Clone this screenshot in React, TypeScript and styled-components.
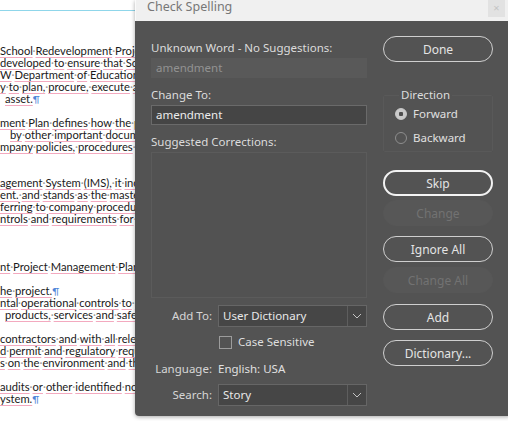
import React from "react";
import styled, { createGlobalStyle } from "styled-components";

const GlobalStyle = createGlobalStyle`
  html, body {
    margin: 0;
    padding: 0;
    background: #ffffff;
    overflow: hidden;
  }
`;

// lines of the document behind the dialog, one per 12px row ("" = empty row)
const docLines: { text: string; indent?: number }[] = [
  { text: "School Redevelopment Project Plan" },
  { text: "developed to ensure that School" },
  { text: "W Department of Education" },
  { text: "y to plan, procure, execute and" },
  { text: "asset.¶", indent: 5 },
  { text: "" },
  { text: "ment Plan defines how the project" },
  { text: "by other important documents", indent: 10 },
  { text: "mpany policies, procedures and" },
  { text: "" },
  { text: "" },
  { text: "agement System (IMS), it includes" },
  { text: "ent. and stands as the master" },
  { text: "ferring to company procedures" },
  { text: "ntrols and requirements for the" },
  { text: "" },
  { text: "" },
  { text: "" },
  { text: "nt Project Management Plan" },
  { text: "" },
  { text: "he project.¶" },
  { text: "ntal operational controls to meet" },
  { text: "products, services and safety", indent: 5 },
  { text: "" },
  { text: "contractors and with all relevant" },
  { text: "d permit and regulatory requirements" },
  { text: "s on the environment and the" },
  { text: "" },
  { text: "audits or other identified non" },
  { text: "ystem.¶" },
];

const renderDocText = (text: string) => {
  const words = text.split(" ");
  return words.map((word, i) => {
    const hasMark = word.endsWith("¶");
    const clean = hasMark ? word.slice(0, -1) : word;
    return (
      <React.Fragment key={i}>
        {i > 0 && <SpaceDot>·</SpaceDot>}
        <Word>{clean}</Word>
        {hasMark && <Pilcrow>¶</Pilcrow>}
      </React.Fragment>
    );
  });
};

const ChevronIcon = () => (
  <svg width="10" height="6" viewBox="0 0 10 6">
    <path d="M1 1 L5 5 L9 1" fill="none" stroke="#c4c4c4" strokeWidth="1" />
  </svg>
);

export default function App() {
  return (
    <>
      <GlobalStyle />
      <Page>
        <Document>
          <MarginGuide />
          {docLines.map((line, i) => (
            <DocLine key={i} $indent={line.indent ?? 0}>
              {line.text ? renderDocText(line.text) : "\u00a0"}
            </DocLine>
          ))}
        </Document>

        <Dialog>
          <TitleBar>
            <Title>Check Spelling</Title>
            <CloseBox>×</CloseBox>
          </TitleBar>

          <Body>
            <MainColumn>
              <Label $top={4}>Unknown Word - No Suggestions:</Label>
              <ReadOnlyField>amendment</ReadOnlyField>
              <Label $top={9}>Change To:</Label>
              <TextField>amendment</TextField>
              <Label $top={9}>Suggested Corrections:</Label>
              <ListBox />

              <FormRow $top={7}>
                <RowLabel>Add To:</RowLabel>
                <Select>
                  <SelectValue>User Dictionary</SelectValue>
                  <SelectArrow>
                    <ChevronIcon />
                  </SelectArrow>
                </Select>
              </FormRow>

              <FormRow $top={7}>
                <RowLabel />
                <CheckLine>
                  <CheckBox />
                  <span>Case Sensitive</span>
                </CheckLine>
              </FormRow>

              <FormRow $top={11}>
                <RowLabel>Language:</RowLabel>
                <RowValue>English: USA</RowValue>
              </FormRow>

              <FormRow $top={7}>
                <RowLabel>Search:</RowLabel>
                <Select>
                  <SelectValue>Story</SelectValue>
                  <SelectArrow>
                    <ChevronIcon />
                  </SelectArrow>
                </Select>
              </FormRow>
            </MainColumn>

            <ButtonColumn>
              <PillButton>Done</PillButton>

              <DirectionGroup>
                <Legend>Direction</Legend>
                <RadioRow>
                  <Radio $checked />
                  <span>Forward</span>
                </RadioRow>
                <RadioRow $top={8}>
                  <Radio />
                  <span>Backward</span>
                </RadioRow>
              </DirectionGroup>

              <PillButton $top={18} $focused>
                Skip
              </PillButton>
              <PillButton $top={4} disabled>
                Change
              </PillButton>
              <PillButton $top={10}>Ignore All</PillButton>
              <PillButton $top={5} disabled>
                Change All
              </PillButton>
              <PillButton $top={11}>Add</PillButton>
              <PillButton $top={10}>Dictionary...</PillButton>
            </ButtonColumn>
          </Body>
        </Dialog>
      </Page>
    </>
  );
}

const Page = styled.div`
  position: relative;
  width: 508px;
  height: 421px;
  overflow: hidden;
  background: #ffffff;
`;

const Document = styled.div`
  padding-top: 45px;
  font-family: Lato, "Open Sans", sans-serif;
  font-size: 11.2px;
  color: #1a1a1a;
`;

const MarginGuide = styled.div`
  position: absolute;
  top: 10px;
  left: 0;
  width: 140px;
  height: 1px;
  background: #8fd6ea;
`;

const DocLine = styled.div<{ $indent: number }>`
  height: 12px;
  line-height: 12px;
  white-space: nowrap;
  padding-left: ${({ $indent }) => $indent}px;
`;

const Word = styled.span`
  text-decoration: underline;
  text-decoration-color: #f3a9bf;
  text-underline-offset: 2px;
`;

const SpaceDot = styled.span`
  color: #9a9a9a;
`;

const Pilcrow = styled.span`
  color: #4f86d8;
  font-size: 10px;
`;

const Dialog = styled.div`
  position: absolute;
  top: 0;
  left: 135px;
  width: 376px;
  height: 416px;
  display: flex;
  flex-direction: column;
  border-radius: 0 0 4px 4px;
  overflow: hidden;
  box-shadow: 0 1px 4px rgba(0, 0, 0, 0.35);
  font-family: "Noto Sans", "Open Sans", sans-serif;
  font-size: 11.5px;
  color: #d9d9d9;
`;

const TitleBar = styled.div`
  height: 21px;
  flex-shrink: 0;
  display: flex;
  align-items: flex-start;
  justify-content: space-between;
  background: #f0f0f0;
  border-left: 1px solid #fafafa;
  padding-left: 11px;
  padding-right: 6px;
`;

const Title = styled.span`
  font-family: "Noto Sans", sans-serif;
  font-size: 12.5px;
  line-height: 15px;
  margin-top: -1px;
  color: #777777;
`;

const CloseBox = styled.div`
  width: 17px;
  height: 17px;
  background: #e2e2e2;
  color: #c4c4c4;
  font-size: 11px;
  line-height: 16px;
  text-align: center;
`;

const Body = styled.div`
  flex: 1;
  display: flex;
  gap: 16px;
  padding: 15px 0 0 16px;
  background: #535353;
`;

const MainColumn = styled.div`
  width: 216px;
  display: flex;
  flex-direction: column;
`;

const Label = styled.div<{ $top?: number }>`
  margin-top: ${({ $top = 0 }) => $top}px;
  line-height: 16px;
  color: #dcdcdc;
`;

const ReadOnlyField = styled.div`
  margin-top: 2px;
  height: 20px;
  line-height: 20px;
  padding-left: 5px;
  background: #595959;
  color: #929292;
`;

const TextField = styled.div`
  margin-top: 2px;
  height: 18px;
  line-height: 18px;
  padding-left: 4px;
  background: #454545;
  border: 1px solid #6a6a6a;
  color: #ececec;
`;

const ListBox = styled.div`
  margin-top: 2px;
  height: 144px;
  border: 1px solid #5b5b5b;
  background: #525252;
`;

const FormRow = styled.div<{ $top?: number }>`
  margin-top: ${({ $top = 0 }) => $top}px;
  display: grid;
  grid-template-columns: 61px 1fr;
  column-gap: 6px;
  align-items: center;
`;

const RowLabel = styled.span`
  text-align: right;
  line-height: 16px;
  color: #d6d6d6;
`;

const RowValue = styled.span`
  line-height: 16px;
  color: #e0e0e0;
`;

const Select = styled.div`
  height: 20px;
  display: flex;
  background: #464646;
  border: 1px solid #666666;
`;

const SelectValue = styled.span`
  flex: 1;
  line-height: 20px;
  padding-left: 4px;
  color: #e8e8e8;
`;

const SelectArrow = styled.span`
  width: 18px;
  display: flex;
  align-items: center;
  justify-content: center;
  border-left: 1px solid #5e5e5e;
`;

const CheckLine = styled.label`
  display: flex;
  align-items: center;
  gap: 6px;
  line-height: 16px;
  padding-left: 1px;
  color: #dedede;
`;

const CheckBox = styled.span`
  width: 11px;
  height: 11px;
  border: 1px solid #9c9c9c;
`;

const ButtonColumn = styled.div`
  width: 110px;
  display: flex;
  flex-direction: column;
`;

const PillButton = styled.button<{ $top?: number; $focused?: boolean }>`
  margin-top: ${({ $top = 0 }) => $top}px;
  height: 26px;
  padding: 0;
  border-radius: 13px;
  font-family: "Noto Sans", "Open Sans", sans-serif;
  font-size: 12px;
  background: transparent;
  color: #e4e4e4;
  border: ${({ $focused }) => ($focused ? "2px solid #f2f2f2" : "1px solid #cfcfcf")};

  &:disabled {
    border: 1px solid #575757;
    background: #575757;
    color: #727272;
  }
`;

const DirectionGroup = styled.fieldset`
  margin: 25px 0 0 0;
  padding: 3px 0 5px 11px;
  border: 1px solid #595959;
  border-radius: 2px;
`;

const Legend = styled.legend`
  margin-left: 4px;
  padding: 0 2px;
  line-height: 16px;
  color: #dcdcdc;
`;

const RadioRow = styled.div<{ $top?: number }>`
  margin-top: ${({ $top = 0 }) => $top}px;
  display: flex;
  align-items: center;
  gap: 6px;
  line-height: 16px;
  color: #e0e0e0;
`;

const Radio = styled.span<{ $checked?: boolean }>`
  width: 12px;
  height: 12px;
  box-sizing: border-box;
  border-radius: 50%;
  border: 1px solid ${({ $checked }) => ($checked ? "#cacaca" : "#8e8e8e")};
  background: ${({ $checked }) =>
    $checked ? "radial-gradient(circle, #4e4e4e 0 2px, #cacaca 2.5px)" : "transparent"};
`;
